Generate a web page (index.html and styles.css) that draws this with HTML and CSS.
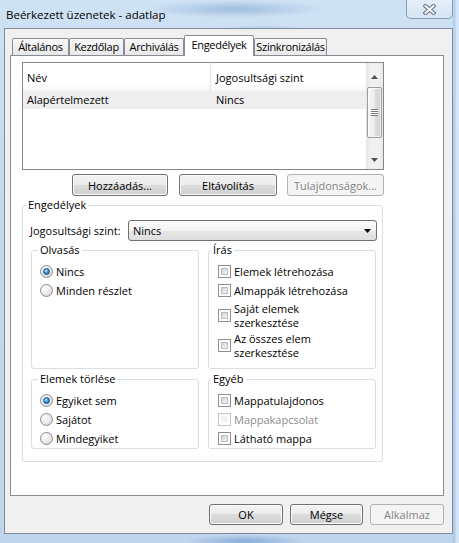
FILE: index.html
```html
<!DOCTYPE html>
<html lang="hu">
<head>
<meta charset="utf-8">
<title>Beérkezett üzenetek - adatlap</title>
<link rel="stylesheet" href="styles.css">
</head>
<body>
<div class="window">
  <div class="titlebar">
    <span class="title">Beérkezett üzenetek - adatlap</span>
    <div class="close">
      <svg width="13" height="11" viewBox="0 0 13 11">
        <path d="M2.5 2 L10.5 9 M10.5 2 L2.5 9" stroke="#6a7584" stroke-width="4.2" stroke-linecap="square" fill="none"/>
        <path d="M2.5 2 L10.5 9 M10.5 2 L2.5 9" stroke="#f4f6f9" stroke-width="2" stroke-linecap="square" fill="none"/>
      </svg>
    </div>
  </div>
  <div class="client">
    <div class="tabs">
      <div class="tab w1">Általános</div>
      <div class="tab w2">Kezdőlap</div>
      <div class="tab w3">Archiválás</div>
      <div class="tab w4 sel">Engedélyek</div>
      <div class="tab w5">Szinkronizálás</div>
    </div>
    <div class="panel">
      <div class="listview">
        <div class="lv-main">
          <div class="lv-header">
            <div class="c1 hdiv">Név</div>
            <div class="c2">Jogosultsági szint</div>
          </div>
          <div class="lv-row">
            <div class="c1">Alapértelmezett</div>
            <div class="c2">Nincs</div>
          </div>
        </div>
        <div class="scrollbar">
          <div class="sb-up">
            <svg width="7" height="4" viewBox="0 0 7 4"><polygon points="0,4 3.5,0 7,4" fill="#505050"/></svg>
          </div>
          <div class="sb-thumb"><div class="grip"></div></div>
          <div class="sb-space"></div>
          <div class="sb-down">
            <svg width="7" height="4" viewBox="0 0 7 4"><polygon points="0,0 7,0 3.5,4" fill="#505050"/></svg>
          </div>
        </div>
      </div>
      <div class="btnrow">
        <div class="btn bw1">Hozzáadás...</div>
        <div class="btn bw2">Eltávolítás</div>
        <div class="btn bw3 dis">Tulajdonságok...</div>
      </div>
      <fieldset class="group g-main">
        <legend class="lg-main">Engedélyek</legend>
        <div class="levelrow">
          <span class="lvl-label">Jogosultsági szint:</span>
          <div class="combo">
            <span>Nincs</span>
            <svg width="7" height="4" viewBox="0 0 7 4"><polygon points="0,0 7,0 3.5,4" fill="#000"/></svg>
          </div>
        </div>
        <div class="subgrid">
          <fieldset class="group sub tall">
            <legend class="lg-left">Olvasás</legend>
            <div class="opt"><span class="radio on"></span><span>Nincs</span></div>
            <div class="opt"><span class="radio"></span><span>Minden részlet</span></div>
          </fieldset>
          <fieldset class="group sub tall">
            <legend class="lg-right">Írás</legend>
            <div class="opt"><span class="check"></span><span>Elemek létrehozása</span></div>
            <div class="opt"><span class="check"></span><span>Almappák létrehozása</span></div>
            <div class="opt two m3"><span class="check"></span><span>Saját elemek<br>szerkesztése</span></div>
            <div class="opt two m4"><span class="check"></span><span>Az összes elem<br>szerkesztése</span></div>
          </fieldset>
          <fieldset class="group sub short">
            <legend class="lg-left">Elemek törlése</legend>
            <div class="opt"><span class="radio on"></span><span>Egyiket sem</span></div>
            <div class="opt"><span class="radio"></span><span>Sajátot</span></div>
            <div class="opt"><span class="radio"></span><span>Mindegyiket</span></div>
          </fieldset>
          <fieldset class="group sub short">
            <legend class="lg-right">Egyéb</legend>
            <div class="opt"><span class="check"></span><span>Mappatulajdonos</span></div>
            <div class="opt disabled"><span class="check"></span><span>Mappakapcsolat</span></div>
            <div class="opt"><span class="check"></span><span>Látható mappa</span></div>
          </fieldset>
        </div>
      </fieldset>
    </div>
    <div class="footer">
      <div class="btn fb fw1">OK</div>
      <div class="btn fb fw2">Mégse</div>
      <div class="btn fb fw1 dis">Alkalmaz</div>
    </div>
  </div>
</div>
</body>
</html>
```

FILE: styles.css
```css
html, body {
  margin: 0;
  padding: 0;
  background: #c3d9ef;
}
body {
  font-family: "Open Sans", "Noto Sans", sans-serif;
  font-size: 11px;
  font-weight: 400;
  color: #000;
}
.window {
  width: 459px;
  height: 543px;
  overflow: hidden;
  background:
    radial-gradient(ellipse 90px 9px at 235px 9px, rgba(120,160,205,0.55), rgba(120,160,205,0) 100%),
    radial-gradient(ellipse 50px 6px at 262px 31px, rgba(110,150,200,0.5), rgba(110,150,200,0) 100%),
    radial-gradient(ellipse 60px 6px at 245px 541px, rgba(90,140,200,0.55), rgba(90,140,200,0) 100%),
    linear-gradient(90deg, rgba(255,255,255,0) 0, rgba(255,255,255,0) 452px, rgba(150,190,230,0.6) 454px, rgba(220,235,248,0.8) 457px),
    linear-gradient(180deg, #cfe2f4 0, #c2d9ef 40%, #bed5ec 100%);
}
.titlebar {
  height: 28px;
  display: flex;
  justify-content: space-between;
  align-items: flex-start;
}
.title {
  padding-left: 6px;
  line-height: 29px;
  font-size: 11.5px;
}
.close {
  width: 47px;
  height: 19px;
  margin-right: 6px;
  box-sizing: border-box;
  border: 1px solid rgba(70, 90, 115, 0.55);
  border-top: none;
  border-radius: 0 0 5px 5px;
  background: linear-gradient(rgba(255,255,255,0.45), rgba(255,255,255,0.15));
  display: flex;
  align-items: center;
  justify-content: center;
}
.client {
  margin: 0 6px 0 4px;
  height: 506px;
  box-sizing: border-box;
  border: 1px solid #7d8b99;
  background: #f0f0f0;
  padding: 6px 8px 0 5px;
}
.tabs {
  display: flex;
  align-items: flex-end;
  height: 20px;
  padding-left: 2px;
}
.tab {
  height: 17px;
  box-sizing: border-box;
  border: 1px solid #898c95;
  border-bottom: none;
  border-radius: 2px 2px 0 0;
  background: linear-gradient(#f8f8f8, #e8e8e8);
  text-align: center;
  line-height: 16px;
  white-space: nowrap;
  letter-spacing: -0.3px;
  overflow: hidden;
}
.w1 { width: 57px; }
.w2 { width: 55px; }
.w3 { width: 60px; }
.w4 { width: 70px; }
.w5 { width: 73px; }
.tab.sel {
  height: 21px;
  background: #fff;
  margin-bottom: -1px;
  position: relative;
  z-index: 1;
  line-height: 18px;
}
.panel {
  height: 441px;
  box-sizing: border-box;
  border: 1px solid #898c95;
  background: #fff;
  padding: 6px 0 0 11px;
}
.listview {
  width: 362px;
  height: 108px;
  box-sizing: border-box;
  border: 1px solid #828790;
  display: flex;
}
.lv-main {
  flex: 1;
}
.lv-header {
  height: 28px;
  line-height: 30px;
  display: flex;
  background: linear-gradient(#ffffff 0, #ffffff 70%, #f6f7f9 100%);
}
.c1 {
  width: 188px;
  box-sizing: border-box;
  padding-left: 4px;
  white-space: nowrap;
}
.c1.hdiv {
  border-right: 1px solid #e3e5e8;
}
.c2 {
  padding-left: 5px;
  white-space: nowrap;
}
.lv-row {
  height: 18px;
  line-height: 18px;
  display: flex;
  background: #eeeeee;
}
.scrollbar {
  width: 17px;
  display: flex;
  flex-direction: column;
  background: linear-gradient(90deg, #e6e6e6, #f1f1f1 30%, #f1f1f1 70%, #e9e9e9);
}
.sb-up {
  height: 24px;
  box-sizing: border-box;
  padding-bottom: 8px;
  display: flex;
  justify-content: center;
  align-items: flex-end;
}
.sb-thumb {
  height: 51px;
  margin: 0 1px;
  box-sizing: border-box;
  border: 1px solid #9b9b9b;
  border-radius: 2px;
  background: linear-gradient(90deg, #f6f6f6, #ececec 50%, #dcdcdc 51%, #d4d4d4);
  box-shadow: inset 0 0 0 1px rgba(255,255,255,0.7);
  display: flex;
  align-items: center;
  justify-content: center;
}
.grip {
  width: 7px;
  height: 7px;
  background: repeating-linear-gradient(#7b7b7b 0 1px, #fbfbfb 1px 2px);
}
.sb-space {
  flex: 1;
}
.sb-down {
  height: 17px;
  display: flex;
  justify-content: center;
  align-items: center;
  padding-bottom: 2px;
  box-sizing: border-box;
}
.btn {
  box-sizing: border-box;
  height: 22px;
  color: #000;
  border: 1px solid #707070;
  border-radius: 3px;
  background: linear-gradient(#f2f2f2 0, #ebebeb 50%, #dddddd 50%, #cfcfcf 100%);
  box-shadow: inset 0 0 0 1px #fbfbfb;
  display: flex;
  align-items: center;
  justify-content: center;
  white-space: nowrap;
}
.btn.dis {
  border-color: #adb2b5;
  background: #f4f4f4;
  box-shadow: none;
  color: #838383;
}
.btnrow {
  width: 362px;
  display: flex;
  justify-content: flex-end;
  margin-top: 4px;
}
.bw1 { width: 96px; }
.bw2 { width: 98px; margin-left: 11px; }
.bw3 { width: 97px; margin-left: 10px; }
.group {
  margin: 0;
  border: 1px solid #d5dfe5;
  border-radius: 3px;
  box-sizing: border-box;
  min-width: 0;
}
.group legend {
  padding: 0 2px;
  line-height: 14px;
}
.g-main {
  width: 361px;
  height: 264px;
  margin-top: 2px;
  padding: 8px 5px 0 7px;
}
.lg-main { margin-left: -4px; }
.levelrow {
  display: flex;
  align-items: center;
  height: 21px;
}
.combo {
  margin-left: auto;
  width: 249px;
  height: 21px;
  box-sizing: border-box;
  border: 1px solid #707070;
  border-radius: 3px;
  background: linear-gradient(#fbfbfb 0, #f3f3f3 50%, #e7e7e7 51%, #dedede 100%);
  display: flex;
  align-items: center;
  justify-content: space-between;
  padding: 0 5px 0 4px;
}
.subgrid {
  display: grid;
  grid-template-columns: 168px 168px;
  column-gap: 9px;
  row-gap: 3px;
  margin: 2px 0 0 1px;
}
.sub {
  padding: 5px 0 0 8px;
}
.tall { height: 126px; }
.short { height: 77px; }
.lg-left { margin-left: -2px; }
.lg-right { margin-left: -6px; }
.opt {
  display: flex;
  align-items: center;
  height: 19px;
  line-height: 14px;
  white-space: nowrap;
}
.opt.two { height: 27px; line-height: 13.5px; }
.opt.m3 { margin-top: 2px; }
.opt.m4 { margin-top: 3px; }
.radio {
  width: 13px;
  height: 13px;
  box-sizing: border-box;
  border-radius: 50%;
  border: 1px solid #8c8c8c;
  background: radial-gradient(circle at 35% 30%, #fdfdfd 0, #ececec 45%, #cfcfcf 100%);
  margin-right: 3px;
  flex-shrink: 0;
  display: flex;
  align-items: center;
  justify-content: center;
}
.radio.on::after {
  content: "";
  width: 7px;
  height: 7px;
  box-sizing: border-box;
  border-radius: 50%;
  border: 1px solid #1c4f80;
  background: radial-gradient(circle at 40% 35%, #bfeaff 0, #3d9ae0 45%, #104f92 100%);
}
.check {
  width: 13px;
  height: 13px;
  box-sizing: border-box;
  border: 1px solid #8e8f8f;
  background: #fff;
  margin: 0 3px 0 1px;
  flex-shrink: 0;
  padding: 2px;
}
.check::after {
  content: "";
  display: block;
  width: 7px;
  height: 7px;
  box-sizing: border-box;
  border: 1px solid #b9bcc0;
  background: linear-gradient(135deg, #d2d2d2, #f7f7f7);
}
.opt.disabled {
  color: #8d8d8d;
}
.opt.disabled .check {
  border-color: #c4c4c4;
}
.opt.disabled .check::after {
  border-color: #f4f4f4;
  background: #f4f4f4;
}
.footer {
  display: flex;
  justify-content: flex-end;
  margin-top: 8px;
}
.fb {
  height: 21px;
  margin-left: 7px;
}
.fw1 { width: 74px; }
.fw2 { width: 73px; }
```
